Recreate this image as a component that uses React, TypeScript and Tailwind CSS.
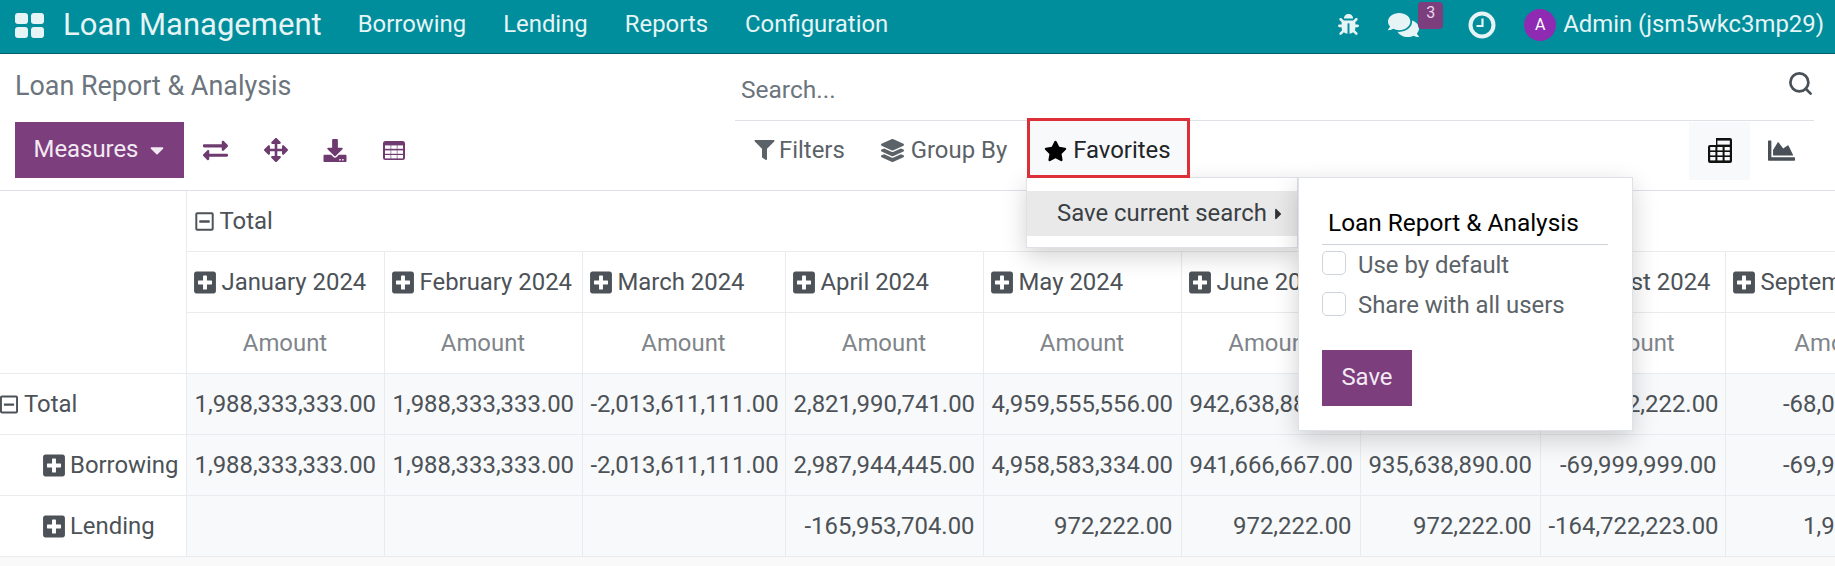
import { Search } from "lucide-react";
import {
  FaArrowsAlt,
  FaBug,
  FaCaretDown,
  FaCaretRight,
  FaChartArea,
  FaComments,
  FaDownload,
  FaExchangeAlt,
  FaFilter,
  FaLayerGroup,
  FaPlusSquare,
  FaRegMinusSquare,
  FaStar,
} from "react-icons/fa";

const columns = [
  { label: "January 2024", width: "w-[198px]" },
  { label: "February 2024", width: "w-[198px]" },
  { label: "March 2024", width: "w-[203px]" },
  { label: "April 2024", width: "w-[198px]" },
  { label: "May 2024", width: "w-[198px]" },
  { label: "June 2024", width: "w-[179px]" },
  { label: "July 2024", width: "w-[180px]" },
  { label: "August 2024", width: "w-[185px]" },
  { label: "September 2024", width: "w-[223px]" },
];

const rows = [
  {
    label: "Total",
    open: true,
    values: [
      "1,988,333,333.00",
      "1,988,333,333.00",
      "-2,013,611,111.00",
      "2,821,990,741.00",
      "4,959,555,556.00",
      "942,638,889.00",
      "936,611,112.00",
      "-234,722,222.00",
      "-68,055,555.00",
    ],
  },
  {
    label: "Borrowing",
    values: [
      "1,988,333,333.00",
      "1,988,333,333.00",
      "-2,013,611,111.00",
      "2,987,944,445.00",
      "4,958,583,334.00",
      "941,666,667.00",
      "935,638,890.00",
      "-69,999,999.00",
      "-69,999,999.00",
    ],
  },
  {
    label: "Lending",
    values: [
      "",
      "",
      "",
      "-165,953,704.00",
      "972,222.00",
      "972,222.00",
      "972,222.00",
      "-164,722,223.00",
      "1,944,444.00",
    ],
  },
];

function AppsIcon() {
  return (
    <div className="grid h-[25px] w-[29px] grid-cols-2 gap-[3px]">
      <span className="rounded-[3px] bg-[#e6f4f5]" />
      <span className="rounded-[3px] bg-[#e6f4f5]" />
      <span className="rounded-[3px] bg-[#e6f4f5]" />
      <span className="rounded-[3px] bg-[#e6f4f5]" />
    </div>
  );
}

function ClockIcon() {
  return (
    <svg viewBox="0 0 28 28" className="h-[28px] w-[28px]" fill="none" stroke="#e6f4f5">
      <circle cx="14" cy="14" r="11.5" strokeWidth="4" />
      <path d="M14.5 7.5v7.5h-6" strokeWidth="2.2" />
    </svg>
  );
}

// outlined grid used in the pivot toolbar
function GridIcon() {
  return (
    <svg viewBox="0 0 22 19" className="h-[19px] w-[22px]">
      <rect width="22" height="19" rx="2.5" fill="currentColor" />
      {[2, 8.2, 14.4].map((x) =>
        [4.4, 9.4, 14].map((y) => (
          <rect key={`${x}-${y}`} x={x} y={y} width="5.6" height="3.4" fill="#fff" />
        )),
      )}
    </svg>
  );
}

// pivot view switcher glyph, top left cell is cut away
function PivotIcon() {
  return (
    <svg viewBox="0 0 24 25" className="h-[25px] w-[24px]">
      <path
        d="M8 0h14a2 2 0 0 1 2 2v21a2 2 0 0 1-2 2H2a2 2 0 0 1-2-2V9a2 2 0 0 1 2-2h6z"
        fill="#111"
      />
      {[2.2, 9.4, 16.6].map((x) =>
        [9, 14, 19].map((y) => (
          <rect key={`${x}-${y}`} x={x} y={y} width="5.2" height="3.4" fill="#f8f9fa" />
        )),
      )}
      <rect x="9.4" y="2.6" width="12.4" height="4" fill="#f8f9fa" />
    </svg>
  );
}

function Navbar() {
  return (
    <header className="flex h-[54px] items-center border-b border-[#00606b] bg-[#008d9c] pb-[3px] pl-[15px] pr-[11px] text-[#e6f4f5]">
      <AppsIcon />
      <span className="ml-[19px] text-[31px]">Loan Management</span>
      <nav className="ml-[36px] flex gap-[37px] text-[23.9px]">
        <span>Borrowing</span>
        <span>Lending</span>
        <span>Reports</span>
        <span>Configuration</span>
      </nav>
      <div className="ml-auto flex items-center">
        <FaBug className="h-[21px] w-[21px]" />
        <div className="relative ml-[29px] mr-[49px]">
          <FaComments className="h-[28px] w-[31px]" />
          <span className="absolute left-[30px] top-[-9px] flex h-[27px] w-[25px] justify-center rounded-[4px] bg-[#7c3e7d] text-[16px] leading-[22px] text-[#e8d5ea]">
            3
          </span>
        </div>
        <ClockIcon />
        <span className="ml-[28px] flex h-[32px] w-[32px] items-center justify-center rounded-full bg-[#8f2bb3] text-[16px] text-white">
          A
        </span>
        <span className="ml-[7px] text-[23.9px]">Admin (jsm5wkc3mp29)</span>
      </div>
    </header>
  );
}

function ControlPanel() {
  return (
    <div className="flex h-[137px] border-b border-[#dee2e6] bg-white pl-[15px] pr-[21px]">
      <div className="w-[720px]">
        <h1 className="mt-[16px] h-[52px] text-[26.9px] leading-[32px] text-[#6c757d]">
          Loan Report &amp; Analysis
        </h1>
        <div className="flex items-center text-[#6e3a6f]">
          <button className="flex h-[56px] w-[169px] items-center justify-center gap-[11px] bg-[#7c3e7d] text-[23.9px] text-[#f3e9f3]">
            Measures
            <FaCaretDown className="h-[22px] w-[16px]" />
          </button>
          <FaExchangeAlt className="ml-[19px] h-[25px] w-[25px]" />
          <FaArrowsAlt className="ml-[36px] h-[24px] w-[24px]" />
          <FaDownload className="ml-[35px] h-[23px] w-[24px]" />
          <span className="ml-[36px]">
            <GridIcon />
          </span>
        </div>
      </div>
      <div className="flex-1">
        <div className="flex h-[67px] items-center justify-between border-b border-[#dee2e6] pl-[6px] pt-[6px]">
          <span className="text-[24.5px] text-[#6c757d]">Search...</span>
          <Search className="mb-[14px] h-[27px] w-[27px] text-[#495057]" strokeWidth={2.4} />
        </div>
        <div className="flex h-[59px] items-center text-[23.9px] text-[#5b6268]">
          <span className="ml-[19px] flex items-center gap-[4px]">
            <FaFilter className="h-[20px] w-[21px]" />
            Filters
          </span>
          <span className="ml-[36px] flex items-center gap-[7px]">
            <FaLayerGroup className="h-[23px] w-[23px]" />
            Group By
          </span>
          <span className="relative z-10 ml-[20px] -mt-[3px] flex h-[60px] w-[163px] items-center gap-[6px] self-start border-[3px] border-[#dc2f36] bg-[#f8f9fa] pl-[14px] pt-[5px] text-[#212529]">
            <FaStar className="h-[22px] w-[23px] text-black" />
            Favorites
          </span>
          <span className="ml-auto mr-[17px] flex h-[58px] w-[61px] items-center justify-center bg-[#f8f9fa]">
            <PivotIcon />
          </span>
          <FaChartArea className="mr-[18px] h-[27px] w-[29px] text-[#495057]" />
        </div>
      </div>
    </div>
  );
}

function PivotTable() {
  return (
    <div className="overflow-hidden">
      <table className="w-[1948px] table-fixed border-collapse bg-white text-[23.9px] text-[#4c5257]">
        <colgroup>
          <col className="w-[186px]" />
          {columns.map((col) => (
            <col key={col.label} className={col.width} />
          ))}
        </colgroup>
        <thead>
          <tr className="h-[60px]">
            <th rowSpan={3} className="border-b border-r border-[#e9ecef]" />
            <th colSpan={9} className="border-b border-[#e9ecef] px-2 pt-[2px] text-left font-normal">
              <span className="flex items-center gap-[5px]">
                <FaRegMinusSquare className="-ml-px h-[21px] w-[21px] shrink-0" />
                Total
              </span>
            </th>
          </tr>
          <tr className="h-[61px]">
            {columns.map((col) => (
              <th key={col.label} className="overflow-hidden whitespace-nowrap border-b border-r border-[#e9ecef] px-2 pt-[2px] text-left font-normal">
                <span className="flex items-center gap-[6px]">
                  <FaPlusSquare className="-ml-px h-[25px] w-[22px] shrink-0" />
                  {col.label}
                </span>
              </th>
            ))}
          </tr>
          <tr className="h-[61px]">
            {columns.map((col) => (
              <th key={col.label} className="border-b border-r border-[#e9ecef] pt-[2px] font-normal text-[#7f858a]">
                Amount
              </th>
            ))}
          </tr>
        </thead>
        <tbody>
          {rows.map((row) => (
            <tr key={row.label} className="h-[61px]">
              <td className="border-b border-r border-[#e9ecef] pt-[2px]">
                <span className={row.open ? "flex items-center gap-[6px]" : "flex items-center gap-[5px] pl-[43px]"}>
                  {row.open ? (
                    <FaRegMinusSquare className="h-[21px] w-[18px] shrink-0" />
                  ) : (
                    <FaPlusSquare className="h-[25px] w-[22px] shrink-0" />
                  )}
                  {row.label}
                </span>
              </td>
              {row.values.map((value, i) => (
                <td key={i} className="whitespace-nowrap border-b border-r border-[#e9ecef] bg-[#f8f9fa] px-2 pt-[2px] text-right">
                  {value}
                </td>
              ))}
            </tr>
          ))}
        </tbody>
      </table>
    </div>
  );
}

function FavoritesMenu() {
  return (
    <div className="absolute left-[1026px] top-[177px] flex items-start text-[23.9px]">
      <div className="h-[71px] w-[272px] border border-[#dee2e6] bg-white pt-[13px] shadow-[0_8px_24px_rgba(0,0,0,0.18)]">
        <div className="flex h-[45px] items-center bg-[#e9e9e9] pl-[30px] text-[#3a3f44]">
          Save current search
          <FaCaretRight className="ml-[7px] h-[18px] w-[9px] text-[#333]" />
        </div>
      </div>
      <div className="h-[254px] w-[335px] border border-[#dee2e6] bg-white pl-[23px] shadow-[0_8px_24px_rgba(0,0,0,0.18)]">
        <div className="mt-[27px] flex h-[40px] w-[286px] items-start border-b border-[#ced4da] pl-[6px] text-[24.4px] text-black">
          Loan Report &amp; Analysis
        </div>
        <label className="mt-[6px] flex h-[24px] items-center gap-[12px] text-[#5b6268]">
          <span className="h-[24px] w-[24px] rounded-[5px] border border-[#ced4da] bg-white" />
          <span className="pt-[5px]">Use by default</span>
        </label>
        <label className="mt-[17px] flex h-[24px] items-center gap-[12px] text-[#5b6268]">
          <span className="h-[24px] w-[24px] rounded-[5px] border border-[#ced4da] bg-white" />
          <span className="pt-[3px]">Share with all users</span>
        </label>
        <button className="mt-[34px] h-[56px] w-[90px] bg-[#7c3e7d] text-[#f3e9f3]">Save</button>
      </div>
    </div>
  );
}

export default function App() {
  return (
    <div className="relative h-[566px] overflow-hidden bg-[#f9f9f9] font-['Roboto',sans-serif]">
      <Navbar />
      <ControlPanel />
      <PivotTable />
      <FavoritesMenu />
    </div>
  );
}
